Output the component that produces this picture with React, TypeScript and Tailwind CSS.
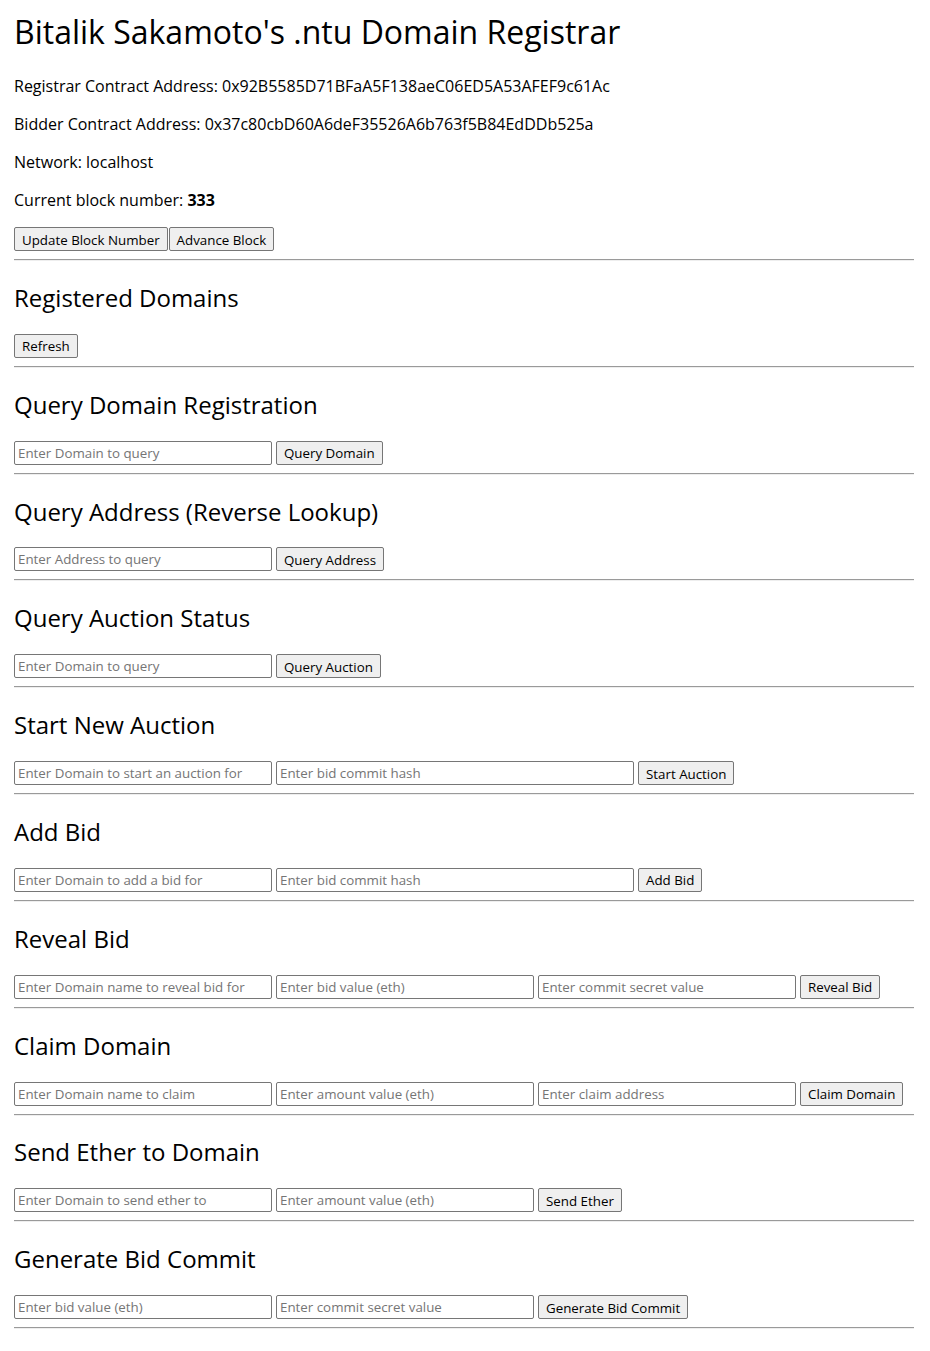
import React from 'react';

const inputCls =
  'h-6 w-[258px] border border-[#767676] rounded-[2px] px-[3px] text-[13.33px] text-black bg-white outline-none placeholder:text-[#757575]';
const wideInputCls =
  'h-6 w-[358px] border border-[#767676] rounded-[2px] px-[3px] text-[13.33px] text-black bg-white outline-none placeholder:text-[#757575]';
const buttonCls =
  'h-6 bg-[#efefef] border border-[#767676] rounded-[2px] px-[7px] pt-[1px] text-[13.33px] text-black leading-[20px]';

function Rule() {
  return <hr className="my-2 h-0 border-t border-b border-t-[#9a9a9a] border-b-[#eeeeee]" />;
}

function Section({ title, children }: { title: string; children: React.ReactNode }) {
  return (
    <>
      <h2 className="text-[24px] leading-[33px] font-normal mt-[19.92px] mb-[19.92px]">{title}</h2>
      <div className="flex items-center gap-1">{children}</div>
      <Rule />
    </>
  );
}

function App() {
  return (
    <div
      className="min-h-screen bg-white text-black pt-[10px] pl-[14px] w-[914px] pb-4"
      style={{ fontFamily: '"Open Sans", "Noto Sans", sans-serif' }}
    >
      <h1 className="text-[32px] leading-[1.362] font-normal mb-[21.44px]">
        Bitalik Sakamoto's .ntu Domain Registrar
      </h1>
      <p className="text-base leading-[22px] mb-4">
        Registrar Contract Address: 0x92B5585D71BFaA5F138aeC06ED5A53AFEF9c61Ac
      </p>
      <p className="text-base leading-[22px] mb-4">
        Bidder Contract Address: 0x37c80cbD60A6deF35526A6b763f5B84EdDDb525a
      </p>
      <p className="text-base leading-[22px] mb-4">Network: localhost</p>
      <p className="text-base leading-[22px] mb-4">
        Current block number: <b className="font-bold">333</b>
      </p>
      <div className="flex items-center gap-[1px]">
        <button className={buttonCls}>Update Block Number</button>
        <button className={buttonCls}>Advance Block</button>
      </div>
      <Rule />

      <Section title="Registered Domains">
        <button className={buttonCls}>Refresh</button>
      </Section>

      <Section title="Query Domain Registration">
        <input className={inputCls} placeholder="Enter Domain to query" />
        <button className={buttonCls}>Query Domain</button>
      </Section>

      <Section title="Query Address (Reverse Lookup)">
        <input className={inputCls} placeholder="Enter Address to query" />
        <button className={buttonCls}>Query Address</button>
      </Section>

      <Section title="Query Auction Status">
        <input className={inputCls} placeholder="Enter Domain to query" />
        <button className={buttonCls}>Query Auction</button>
      </Section>

      <Section title="Start New Auction">
        <input className={inputCls} placeholder="Enter Domain to start an auction for" />
        <input className={wideInputCls} placeholder="Enter bid commit hash" />
        <button className={buttonCls}>Start Auction</button>
      </Section>

      <Section title="Add Bid">
        <input className={inputCls} placeholder="Enter Domain to add a bid for" />
        <input className={wideInputCls} placeholder="Enter bid commit hash" />
        <button className={buttonCls}>Add Bid</button>
      </Section>

      <Section title="Reveal Bid">
        <input className={inputCls} placeholder="Enter Domain name to reveal bid for" />
        <input className={inputCls} placeholder="Enter bid value (eth)" />
        <input className={inputCls} placeholder="Enter commit secret value" />
        <button className={buttonCls}>Reveal Bid</button>
      </Section>

      <Section title="Claim Domain">
        <input className={inputCls} placeholder="Enter Domain name to claim" />
        <input className={inputCls} placeholder="Enter amount value (eth)" />
        <input className={inputCls} placeholder="Enter claim address" />
        <button className={buttonCls}>Claim Domain</button>
      </Section>

      <Section title="Send Ether to Domain">
        <input className={inputCls} placeholder="Enter Domain to send ether to" />
        <input className={inputCls} placeholder="Enter amount value (eth)" />
        <button className={buttonCls}>Send Ether</button>
      </Section>

      <Section title="Generate Bid Commit">
        <input className={inputCls} placeholder="Enter bid value (eth)" />
        <input className={inputCls} placeholder="Enter commit secret value" />
        <button className={buttonCls}>Generate Bid Commit</button>
      </Section>
    </div>
  );
}

export default App;
